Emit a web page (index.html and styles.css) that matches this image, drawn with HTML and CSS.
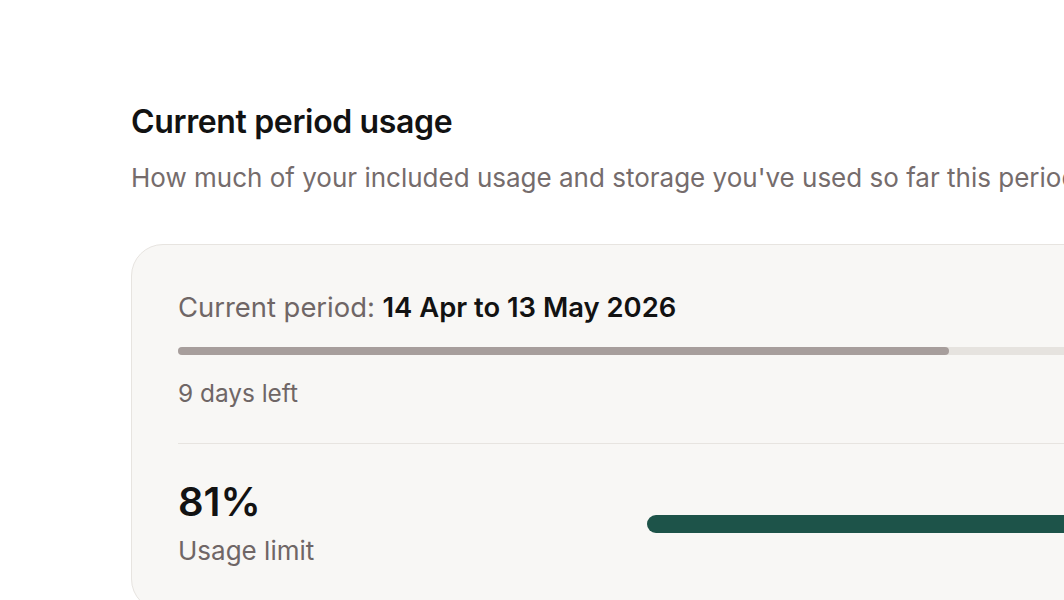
FILE: index.html
```html
<!DOCTYPE html>
<html lang="en">
<head>
<meta charset="UTF-8" />
<meta name="viewport" content="width=device-width, initial-scale=1" />
<title>Usage</title>
<link rel="stylesheet" href="styles.css">
</head>
<body>
<main class="page">
  <h2 class="title">Current period usage</h2>
  <p class="subtitle">How much of your included usage and storage you've used so far this period.</p>

  <section class="card">
    <div class="period">
      <div class="period-label">Current period: <strong>14 Apr to 13 May 2026</strong></div>
      <div class="track"><div class="fill" style="width: 69.7%"></div></div>
      <div class="period-left">9 days left</div>
    </div>

    <div class="usage-row">
      <div class="usage-text">
        <div class="usage-value">81%</div>
        <div class="usage-label">Usage limit</div>
      </div>
      <div class="usage-bar"><div class="usage-fill" style="width: 81%"></div></div>
    </div>
  </section>
</main>
</body>
</html>
```

FILE: styles.css
```css
body {
  margin: 0;
  background: #fff;
  font-family: Inter, "Noto Sans", sans-serif;
  color: #121212;
  overflow: hidden;
}
.page {
  padding: 102px 0 0 131px;
  width: 1200px;
}
.title {
  margin: 0;
  font-size: 32px;
  font-weight: 600;
  line-height: 40px;
  letter-spacing: -0.35px;
}
.subtitle {
  margin: 17px 0 0;
  font-size: 26px;
  line-height: 38px;
  color: #756c6c;
  white-space: nowrap;
}

/* card */
.card {
  margin-top: 47px;
  background: #f8f7f5;
  border: 1.5px solid #e7e4e0;
  border-radius: 32px;
  padding: 43px 46px 40px;
}
.period {
  padding-bottom: 31px;
  border-bottom: 1.5px solid #e7e4e0;
}
.period-label {
  font-size: 27.4px;
  line-height: 38px;
  color: #6f6666;
}
.period-label strong {
  color: #121212;
  font-weight: 600;
}
.track {
  margin-top: 21px;
  height: 8px;
  border-radius: 4px;
  background: #e6e3df;
}
.fill {
  height: 100%;
  border-radius: 4px;
  background: #a79e9c;
}
.period-left {
  margin-top: 18.5px;
  font-size: 24.4px;
  line-height: 38px;
  color: #6f6666;
}

.usage-row {
  display: grid;
  grid-template-columns: 469px 1fr;
  align-items: center;
  padding-top: 34px;
}
.usage-value {
  font-size: 40px;
  font-weight: 600;
  line-height: 48px;
}
.usage-label {
  margin-top: 6px;
  font-size: 26px;
  line-height: 38px;
  color: #6f6666;
}
.usage-bar {
  height: 18px;
  border-radius: 9px;
  background: #e6e3df;
}
.usage-fill {
  height: 100%;
  border-radius: 9px;
  background: #1d5349;
}
```
